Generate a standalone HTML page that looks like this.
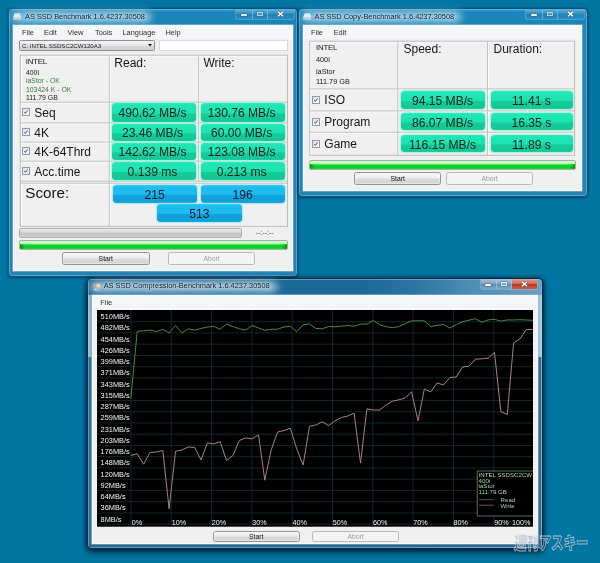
<!DOCTYPE html>
<html><head><meta charset="utf-8"><title>AS SSD Benchmark</title>
<style>
html,body{margin:0;padding:0}
body{width:600px;height:563px;overflow:hidden;position:relative;font-family:"Liberation Sans",sans-serif;
 background:#0276a3;}
#scr{position:absolute;left:0;top:0;width:600px;height:563px;overflow:hidden;filter:blur(0.4px);will-change:transform}
.a{position:absolute;box-sizing:border-box}
.win{position:absolute;box-sizing:border-box;border-radius:4px;border:1px solid #06547d;
 background:linear-gradient(180deg,#3a9fce 0px,#2690c2 2px,#1b84b8 4px,#1b84b8 14px,#2286b8 17px,#2383b5 100%);
 box-shadow:0 0 0 1px rgba(100,180,218,.75) inset,0 1px 3px rgba(0,35,65,.5),0 0 2px rgba(0,35,65,.45);}
.win.act{border-color:#032d4a;background:linear-gradient(90deg,#1b6996 0%,#1b6996 60%,#2a76a2 72%,#4d8db4 84%,#6d9fc0 100%);
 box-shadow:0 0 0 1px rgba(140,185,212,.6) inset,0 3px 7px rgba(0,15,35,.8),0 0 4px rgba(0,15,35,.7);}
.side{position:absolute;box-sizing:border-box}
.client{position:absolute;box-sizing:border-box;background:#f0f0f0;border:1px solid #f4fafd;box-shadow:0 0 0 1px rgba(150,185,205,.55);}
.menubar{position:absolute;background:#f4f6fa;}
.glow{position:absolute;border-radius:8px;background:rgba(235,245,252,.62);filter:blur(3.5px)}
.ttl{position:absolute;font-size:7.4px;color:#0b1a26;white-space:nowrap;line-height:10px;text-shadow:0 0 3px rgba(255,255,255,.9),0 0 5px rgba(255,255,255,.7)}
.mi{position:absolute;font-size:7.4px;color:#2c2c2c;white-space:nowrap;line-height:10px}
.cap{position:absolute;box-sizing:border-box;border:0.6px solid rgba(190,225,245,.3);border-top:none;border-radius:0 0 3px 3px;overflow:hidden}
.cap i{position:absolute;top:0;bottom:0;display:block;box-sizing:border-box}
.tbl{position:absolute;box-sizing:border-box;background:#f0f0f0;border:0.7px solid #bdbdbd}
.vl{position:absolute;width:0.8px;background:#c4c4c4}
.hl{position:absolute;height:0.8px;background:#c9c9c9}
.t{position:absolute;white-space:nowrap;color:#161616}
.sm{font-size:6.85px;line-height:8px}
.hd{font-size:12px;line-height:14px}
.lb{font-size:12px;line-height:14px}
.pill{position:absolute;box-sizing:border-box;border-radius:3.5px;text-align:center;font-size:12.1px;color:#06231a;padding-right:2.4px;
 background:linear-gradient(180deg,#2cebbd 0%,#1ee6b4 12%,#1de3b1 53%,#15cc9a 58%,#14c896 90%,#19cf9d 100%);
 box-shadow:0 0 1.2px 0.7px rgba(150,245,215,.85)}
.blue{position:absolute;box-sizing:border-box;border-radius:3.5px;text-align:center;font-size:12.1px;color:#06182a;padding-right:0.4px;
 background:linear-gradient(180deg,#34c8f6 0%,#1ebef0 12%,#1dbbee 52%,#10a4da 57%,#0fa0d7 90%,#15a8dd 100%);
 box-shadow:0 0 1.2px 0.7px rgba(165,230,250,.85)}
.cb{position:absolute;box-sizing:border-box;width:7.8px;height:7.8px;border:1px solid #9499a6;background:linear-gradient(135deg,#d9dde9,#f2f3f8 55%,#fdfdfe);}
.cb svg{position:absolute;left:0;top:0;width:100%;height:100%}
.gbar{position:absolute;box-sizing:border-box;border-radius:2px;border:0.6px solid #9ab89a;
 background:linear-gradient(180deg,#d6fbd6 0%,#b6f7b6 38%,#3be050 45%,#12d42e 52%,#0bd028 82%,#2ad644 100%);overflow:hidden}
.gbar:before,.gbar:after{content:"";position:absolute;top:0;bottom:0;width:5px}
.gbar:before{left:0;top:42%;background:linear-gradient(90deg,rgba(0,110,0,.6),rgba(0,120,0,0))}
.gbar:after{right:0;top:42%;background:linear-gradient(270deg,rgba(0,110,0,.6),rgba(0,120,0,0))}
.pbar{position:absolute;box-sizing:border-box;border-radius:2px;border:0.6px solid #aeaeae;
 background:linear-gradient(180deg,#ececec 0%,#d6d6d6 40%,#c2c2c2 60%,#cfcfcf 100%)}
.btn{position:absolute;box-sizing:border-box;border-radius:2.5px;border:0.7px solid #959595;text-align:center;font-size:6.8px;color:#111;
 background:linear-gradient(180deg,#f6f6f6 0%,#ececec 48%,#dcdcdc 52%,#d2d2d2 100%);box-shadow:0 0 0 0.5px rgba(255,255,255,.8) inset}
.btn.dis{border-color:#b9b9b9;background:#f4f4f4;color:#9c9c9c;box-shadow:none}
</style></head>
<body>
<div id="scr">
<div class="win" style="left:8px;top:8px;width:290px;height:269px"></div>
<div class="cap" style="left:234.6px;top:9.5px;width:60.0px;height:10.9px"><i style="left:0;right:0;background:linear-gradient(180deg,rgba(255,255,255,.22) 0%,rgba(255,255,255,.10) 45%,rgba(255,255,255,.0) 50%,rgba(255,255,255,.08) 100%)"></i><i style="left:16.5px;width:0.7px;background:rgba(200,230,248,.4)"></i><i style="left:31.2px;width:0.7px;background:rgba(200,230,248,.4)"></i><i style="left:5.2px;top:4.7px;width:5.8px;height:2.3px;bottom:auto;background:rgba(255,255,255,.88);border-radius:.8px;box-shadow:0 0 0 .6px rgba(50,80,110,.6)"></i><i style="left:21.4px;top:2.8px;width:6px;height:4.2px;bottom:auto;border:0.9px solid rgba(215,238,252,.7);border-top-width:1.3px;background:rgba(255,255,255,.12);box-shadow:0 0 0 .4px rgba(50,80,110,.6)"></i><svg class="a" style="left:41.0px;top:1.8px;width:7px;height:6px" viewBox="0 0 7 6"><path d="M1 0.7 L6 5.3 M6 0.7 L1 5.3" stroke="#3a4f66" stroke-width="2.3" fill="none"/><path d="M1 0.7 L6 5.3 M6 0.7 L1 5.3" stroke="#fff" stroke-width="1.5" fill="none"/></svg></div>
<svg class="a" style="left:13.0px;top:12.8px;width:8.5px;height:7.5px" viewBox="0 0 17 15"><path d="M3.5 1 L13.5 1 L16.5 9 L16.5 14 L0.5 14 L0.5 9 Z" fill="#d9dcdf" stroke="#7a848c" stroke-width="0.8"/><path d="M0.5 9 L16.5 9 L16.5 14 L0.5 14 Z" fill="#aeb4b9"/><path d="M3.5 1 L13.5 1 L16.2 8.6 L0.8 8.6 Z" fill="#eceeef"/></svg>
<div class="glow" style="left:12px;top:11px;width:140px;height:12px;background:rgba(200,232,250,.62)"></div>
<div class="ttl" style="left:25px;top:12px">AS SSD Benchmark 1.6.4237.30508</div>
<div class="client" style="left:13px;top:25px;width:280px;height:246px"></div>
<div class="menubar" style="left:14px;top:26px;width:278px;height:12.5px"></div>
<div class="mi" style="left:22.0px;top:28px">File</div>
<div class="mi" style="left:44.0px;top:28px">Edit</div>
<div class="mi" style="left:67.5px;top:28px">View</div>
<div class="mi" style="left:95.0px;top:28px">Tools</div>
<div class="mi" style="left:122.5px;top:28px">Language</div>
<div class="mi" style="left:165.5px;top:28px">Help</div>
<div class="a" style="left:19px;top:40px;width:136px;height:11px;border:0.7px solid #8d8d8d;border-radius:1.5px;background:linear-gradient(180deg,#f4f4f4,#e6e6e6 50%,#d8d8d8 52%,#cfcfcf)"></div>
<div class="t" style="left:22px;top:41.5px;font-size:6.15px;line-height:8px">C: INTEL SSDSC2CW120A3</div>
<svg class="a" style="left:147.5px;top:44.3px;width:4px;height:2.6px" viewBox="0 0 8 5"><path d="M0 0 L8 0 L4 5 Z" fill="#111"/></svg>
<div class="a" style="left:158.7px;top:40px;width:129px;height:11.2px;border:0.7px solid #d6dadf;background:#fff"></div>
<svg class="a" style="left:18px;top:53px;width:273px;height:177px" viewBox="0 0 273 177"><rect x="2.30" y="2.20" width="267.20" height="171.20" fill="#f0f0f0"/><path d="M2.30 50.20H269.50M2.30 70.90H269.50M2.30 90.10H269.50M2.30 109.20H269.50M2.30 129.20H269.50M2.30 131.20H269.50M92.30 2.20V173.40M181.60 2.20V128.10M3.30 2.20V173.40M2.30 3.20H269.50" stroke="rgba(255,255,255,.7)" stroke-width="1" fill="none"/><path d="M2.30 49.20H269.50M2.30 69.90H269.50M2.30 89.10H269.50M2.30 108.20H269.50M2.30 128.20H269.50M2.30 130.20H269.50M91.30 2.20V173.40M180.60 2.20V128.10" stroke="#c3c3c3" stroke-width="1" fill="none"/><rect x="2.30" y="2.20" width="267.20" height="171.20" fill="none" stroke="#bcbcbc" stroke-width="1"/></svg>
<div class="t" style="left:25.7px;top:57.2px;font-size:7.9px;line-height:9px;letter-spacing:-0.25px">INTEL</div>
<div class="t sm" style="left:26px;top:68.5px">400i</div>
<div class="t sm" style="left:26px;top:77.4px;color:#3b7d3f">iaStor - OK</div>
<div class="t sm" style="left:26px;top:85.7px;color:#3b7d3f">103424 K - OK</div>
<div class="t sm" style="left:26px;top:93.5px">111.79 GB</div>
<div class="t hd" style="left:114.3px;top:56px">Read:</div>
<div class="t hd" style="left:203.5px;top:56px">Write:</div>
<div class="cb" style="left:22.2px;top:108.3px"><svg viewBox="0 0 10 10"><path d="M2.2 5.2 L4.2 7.6 L8 2.4" fill="none" stroke="#3a4173" stroke-width="1.6"/></svg></div>
<div class="t lb" style="left:34.3px;top:106.3px">Seq</div>
<div class="pill" style="left:111.7px;top:103.2px;width:84.0px;height:18.6px;line-height:21.4px">490.62 MB/s</div>
<div class="pill" style="left:200.9px;top:103.2px;width:83.9px;height:18.6px;line-height:21.4px">130.76 MB/s</div>
<div class="cb" style="left:22.2px;top:128.2px"><svg viewBox="0 0 10 10"><path d="M2.2 5.2 L4.2 7.6 L8 2.4" fill="none" stroke="#3a4173" stroke-width="1.6"/></svg></div>
<div class="t lb" style="left:34.3px;top:126.2px">4K</div>
<div class="pill" style="left:111.7px;top:123.9px;width:84.0px;height:17.1px;line-height:19.9px">23.46 MB/s</div>
<div class="pill" style="left:200.9px;top:123.9px;width:83.9px;height:17.1px;line-height:19.9px">60.00 MB/s</div>
<div class="cb" style="left:22.2px;top:147.3px"><svg viewBox="0 0 10 10"><path d="M2.2 5.2 L4.2 7.6 L8 2.4" fill="none" stroke="#3a4173" stroke-width="1.6"/></svg></div>
<div class="t lb" style="left:34.3px;top:145.3px">4K-64Thrd</div>
<div class="pill" style="left:111.7px;top:143.1px;width:84.0px;height:17.0px;line-height:19.8px">142.62 MB/s</div>
<div class="pill" style="left:200.9px;top:143.1px;width:83.9px;height:17.0px;line-height:19.8px">123.08 MB/s</div>
<div class="cb" style="left:22.2px;top:166.9px"><svg viewBox="0 0 10 10"><path d="M2.2 5.2 L4.2 7.6 L8 2.4" fill="none" stroke="#3a4173" stroke-width="1.6"/></svg></div>
<div class="t lb" style="left:34.3px;top:164.9px">Acc.time</div>
<div class="pill" style="left:111.7px;top:162.2px;width:84.0px;height:17.9px;line-height:20.7px">0.139 ms</div>
<div class="pill" style="left:200.9px;top:162.2px;width:83.9px;height:17.9px;line-height:20.7px">0.213 ms</div>
<div class="t" style="left:25.3px;top:184px;font-size:15.2px;line-height:17px">Score:</div>
<div class="blue" style="left:112.8px;top:184.7px;width:84.1px;height:17.9px;line-height:20.5px">215</div>
<div class="blue" style="left:200.9px;top:184.7px;width:84.0px;height:17.9px;line-height:20.5px">196</div>
<div class="blue" style="left:157.4px;top:204.0px;width:84.2px;height:18.0px;line-height:20.6px">513</div>
<div class="pbar" style="left:19px;top:228px;width:222.5px;height:9.5px"></div>
<div class="t" style="left:255.8px;top:228.8px;font-size:7px;line-height:8px;color:#444">--:--:--</div>
<div class="gbar" style="left:19px;top:240px;width:269px;height:9.7px"></div>
<div class="btn" style="left:62px;top:252px;width:87.6px;height:12.6px;line-height:11.2px">Start</div>
<div class="btn dis" style="left:167.8px;top:252px;width:87.6px;height:12.6px;line-height:11.2px">Abort</div>
<div class="win" style="left:298px;top:8px;width:290px;height:189px"></div>
<div class="cap" style="left:524.6px;top:9.5px;width:60.0px;height:10.7px"><i style="left:0;right:0;background:linear-gradient(180deg,rgba(255,255,255,.22) 0%,rgba(255,255,255,.10) 45%,rgba(255,255,255,.0) 50%,rgba(255,255,255,.08) 100%)"></i><i style="left:16.5px;width:0.7px;background:rgba(200,230,248,.4)"></i><i style="left:31.2px;width:0.7px;background:rgba(200,230,248,.4)"></i><i style="left:5.3px;top:4.6px;width:5.8px;height:2.3px;bottom:auto;background:rgba(255,255,255,.88);border-radius:.8px;box-shadow:0 0 0 .6px rgba(50,80,110,.6)"></i><i style="left:21.4px;top:2.8px;width:6px;height:4.2px;bottom:auto;border:0.9px solid rgba(215,238,252,.7);border-top-width:1.3px;background:rgba(255,255,255,.12);box-shadow:0 0 0 .4px rgba(50,80,110,.6)"></i><svg class="a" style="left:41.0px;top:1.7px;width:7px;height:6px" viewBox="0 0 7 6"><path d="M1 0.7 L6 5.3 M6 0.7 L1 5.3" stroke="#3a4f66" stroke-width="2.3" fill="none"/><path d="M1 0.7 L6 5.3 M6 0.7 L1 5.3" stroke="#fff" stroke-width="1.5" fill="none"/></svg></div>
<svg class="a" style="left:302.5px;top:12.8px;width:8.5px;height:7.5px" viewBox="0 0 17 15"><path d="M3.5 1 L13.5 1 L16.5 9 L16.5 14 L0.5 14 L0.5 9 Z" fill="#d9dcdf" stroke="#7a848c" stroke-width="0.8"/><path d="M0.5 9 L16.5 9 L16.5 14 L0.5 14 Z" fill="#aeb4b9"/><path d="M3.5 1 L13.5 1 L16.2 8.6 L0.8 8.6 Z" fill="#eceeef"/></svg>
<div class="glow" style="left:302px;top:11px;width:160px;height:12px;background:rgba(200,232,250,.62)"></div>
<div class="ttl" style="left:314.5px;top:12px">AS SSD Copy-Benchmark 1.6.4237.30508</div>
<div class="client" style="left:303px;top:25px;width:279px;height:166px"></div>
<div class="menubar" style="left:304px;top:26px;width:277px;height:13px"></div>
<div class="mi" style="left:311.0px;top:28px">File</div>
<div class="mi" style="left:333.7px;top:28px">Edit</div>
<svg class="a" style="left:307px;top:39px;width:271px;height:120px" viewBox="0 0 271 120"><rect x="2.70" y="2.20" width="264.90" height="114.10" fill="#f0f0f0"/><path d="M2.70 50.90H267.60M2.70 72.90H267.60M2.70 94.30H267.60M91.80 2.20V116.30M181.50 2.20V116.30M3.70 2.20V116.30M2.70 3.20H267.60" stroke="rgba(255,255,255,.7)" stroke-width="1" fill="none"/><path d="M2.70 49.90H267.60M2.70 71.90H267.60M2.70 93.30H267.60M90.80 2.20V116.30M180.50 2.20V116.30" stroke="#c3c3c3" stroke-width="1" fill="none"/><rect x="2.70" y="2.20" width="264.90" height="114.10" fill="none" stroke="#bcbcbc" stroke-width="1"/></svg>
<div class="t" style="left:316px;top:43px;font-size:7.8px;line-height:9px;letter-spacing:-0.2px">INTEL</div>
<div class="t sm" style="left:316px;top:56px;font-size:7.3px">400i</div>
<div class="t sm" style="left:316px;top:67.7px;font-size:7.3px">iaStor</div>
<div class="t sm" style="left:316px;top:77.7px;font-size:7.3px">111.79 GB</div>
<div class="t hd" style="left:403.5px;top:42.3px">Speed:</div>
<div class="t hd" style="left:493.5px;top:42.3px">Duration:</div>
<div class="cb" style="left:312.3px;top:96.2px"><svg viewBox="0 0 10 10"><path d="M2.2 5.2 L4.2 7.6 L8 2.4" fill="none" stroke="#3a4173" stroke-width="1.6"/></svg></div>
<div class="t lb" style="left:324.3px;top:92.9px">ISO</div>
<div class="pill" style="left:401.1px;top:91.2px;width:83.5px;height:17.5px;line-height:21.1px;padding-right:0.6px">94.15 MB/s</div>
<div class="pill" style="left:490.8px;top:91.2px;width:81.8px;height:17.5px;line-height:21.1px;padding-right:0.6px">11.41 s</div>
<div class="cb" style="left:312.3px;top:117.9px"><svg viewBox="0 0 10 10"><path d="M2.2 5.2 L4.2 7.6 L8 2.4" fill="none" stroke="#3a4173" stroke-width="1.6"/></svg></div>
<div class="t lb" style="left:324.3px;top:114.6px">Program</div>
<div class="pill" style="left:401.1px;top:112.9px;width:83.5px;height:17.5px;line-height:21.1px;padding-right:0.6px">86.07 MB/s</div>
<div class="pill" style="left:490.8px;top:112.9px;width:81.8px;height:17.5px;line-height:21.1px;padding-right:0.6px">16.35 s</div>
<div class="cb" style="left:312.3px;top:139.9px"><svg viewBox="0 0 10 10"><path d="M2.2 5.2 L4.2 7.6 L8 2.4" fill="none" stroke="#3a4173" stroke-width="1.6"/></svg></div>
<div class="t lb" style="left:324.3px;top:136.6px">Game</div>
<div class="pill" style="left:401.1px;top:134.9px;width:83.5px;height:17.5px;line-height:21.1px;padding-right:0.6px">116.15 MB/s</div>
<div class="pill" style="left:490.8px;top:134.9px;width:81.8px;height:17.5px;line-height:21.1px;padding-right:0.6px">11.89 s</div>
<div class="gbar" style="left:309px;top:160px;width:267px;height:9.7px"></div>
<div class="btn" style="left:354px;top:172px;width:87.4px;height:12.6px;line-height:11.2px">Start</div>
<div class="btn dis" style="left:446px;top:172px;width:87px;height:12.6px;line-height:11.2px">Abort</div>
<div class="win act" style="left:87px;top:278px;width:456px;height:271px"></div>
<div class="side" style="left:88px;top:295px;width:4px;height:62px;background:linear-gradient(90deg,#a3c5d9,#8fb2c7 55%,#7d9db3)"></div>
<div class="side" style="left:89px;top:357px;width:3px;height:187px;background:linear-gradient(90deg,#26648e,#3c7299 50%,#5a86a6)"></div>
<div class="side" style="left:537px;top:295px;width:5px;height:62px;background:linear-gradient(90deg,#8fb0c5,#a5c6da 60%,#b5d2e3)"></div>
<div class="side" style="left:537px;top:357px;width:4px;height:187px;background:linear-gradient(90deg,#5a86a6,#2d6991 40%,#2d6991)"></div>
<div class="side" style="left:89px;top:543px;width:452px;height:4px;background:linear-gradient(180deg,#46789c,#28648d 40%,#2d6a92)"></div>
<div class="cap" style="left:480.0px;top:279.2px;width:58.0px;height:10.6px"><i style="left:0;width:31.4px;background:linear-gradient(180deg,#a3c2d8 0%,#7ea6c3 45%,#5c8db2 52%,#79a7c8 100%)"></i><i style="left:31.4px;right:0;background:linear-gradient(180deg,#dfa596 0%,#cf6a58 45%,#bb3522 52%,#cf5a3c 100%)"></i><i style="left:14.6px;width:0.7px;background:rgba(200,230,248,.4)"></i><i style="left:30.2px;width:0.7px;background:rgba(200,230,248,.4)"></i><i style="left:4.3px;top:4.6px;width:5.8px;height:2.3px;bottom:auto;background:rgba(255,255,255,1);border-radius:.8px;box-shadow:0 0 0 .6px rgba(50,80,110,.6)"></i><i style="left:20.0px;top:2.8px;width:6px;height:4.2px;bottom:auto;border:0.9px solid rgba(215,238,252,.95);border-top-width:1.3px;background:rgba(255,255,255,.12);box-shadow:0 0 0 .4px rgba(50,80,110,.6)"></i><svg class="a" style="left:39.5px;top:1.7px;width:7px;height:6px" viewBox="0 0 7 6"><path d="M1 0.7 L6 5.3 M6 0.7 L1 5.3" stroke="#3a4f66" stroke-width="2.3" fill="none"/><path d="M1 0.7 L6 5.3 M6 0.7 L1 5.3" stroke="#fff" stroke-width="1.5" fill="none"/></svg></div>
<svg class="a" style="left:92.5px;top:283.3px;width:8px;height:8px" viewBox="0 0 16 16"><rect x="0.5" y="0.5" width="15" height="15" rx="2.5" fill="rgba(225,235,243,.3)"/><circle cx="4.6" cy="8.3" r="3.4" fill="#d5442f"/><circle cx="10.6" cy="5.2" r="3.8" fill="#f3d236"/><circle cx="10.4" cy="12" r="2.4" fill="#4f7fcf"/><circle cx="5.5" cy="13" r="1.6" fill="#e8eef4"/></svg>
<div class="glow" style="left:90px;top:281px;width:188px;height:12px;background:rgba(225,238,247,.62)"></div>
<div class="ttl" style="left:103.7px;top:281.4px">AS SSD Compression-Benchmark 1.6.4237.30508</div>
<div class="client" style="left:92px;top:295px;width:445.5px;height:248.7px"></div>
<div class="menubar" style="left:93px;top:296px;width:443.5px;height:13.5px"></div>
<div class="mi" style="left:100.3px;top:297.6px">File</div>
<svg class="a" style="left:97.4px;top:310px;width:436px;height:216.7px" viewBox="0 0 436 216.7"><rect x="0" y="0" width="436" height="216.7" fill="#000"/><path d="M33.90 0V216.7M74.22 0V216.7M114.54 0V216.7M154.86 0V216.7M195.18 0V216.7M235.50 0V216.7M275.82 0V216.7M316.14 0V216.7M356.46 0V216.7M396.78 0V216.7M0 11.70H436M0 22.95H436M0 34.20H436M0 45.45H436M0 56.70H436M0 67.95H436M0 79.20H436M0 90.45H436M0 101.70H436M0 112.95H436M0 124.20H436M0 135.45H436M0 146.70H436M0 157.95H436M0 169.20H436M0 180.45H436M0 191.70H436M0 202.95H436M0 214.20H436" stroke="#10292c" stroke-width="0.95" fill="none"/><g font-family="Liberation Sans, sans-serif" font-size="7.4" fill="#f4f4f4"><text x="3.6" y="9.1">510MB/s</text><text x="3.6" y="20.4">482MB/s</text><text x="3.6" y="31.6">454MB/s</text><text x="3.6" y="42.9">426MB/s</text><text x="3.6" y="54.1">399MB/s</text><text x="3.6" y="65.4">371MB/s</text><text x="3.6" y="76.7">343MB/s</text><text x="3.6" y="87.9">315MB/s</text><text x="3.6" y="99.2">287MB/s</text><text x="3.6" y="110.4">259MB/s</text><text x="3.6" y="121.7">231MB/s</text><text x="3.6" y="133.0">203MB/s</text><text x="3.6" y="144.2">176MB/s</text><text x="3.6" y="155.5">148MB/s</text><text x="3.6" y="166.7">120MB/s</text><text x="3.6" y="178.0">92MB/s</text><text x="3.6" y="189.3">64MB/s</text><text x="3.6" y="200.5">36MB/s</text><text x="3.6" y="211.8">8MB/s</text><text x="34.7" y="214.6" font-size="7.2">0%</text><text x="74.7" y="214.6" font-size="7.2">10%</text><text x="114.7" y="214.6" font-size="7.2">20%</text><text x="155.2" y="214.6" font-size="7.2">30%</text><text x="195.5" y="214.6" font-size="7.2">40%</text><text x="235.7" y="214.6" font-size="7.2">50%</text><text x="275.9" y="214.6" font-size="7.2">60%</text><text x="316.2" y="214.6" font-size="7.2">70%</text><text x="356.4" y="214.6" font-size="7.2">80%</text><text x="397.2" y="214.6" font-size="7.2">90%</text><text x="415.0" y="214.6" font-size="7.2">100%</text></g><polyline points="33.8,88.8 40.2,21.4 46.6,20.7 53.0,20.1 59.4,21.6 65.8,19.2 72.1,22.9 78.5,15.5 84.9,22.9 91.3,18.8 97.7,20.1 104.0,18.5 110.4,17.0 116.8,16.5 123.2,19.2 129.5,14.1 135.9,16.5 142.3,18.8 148.7,20.1 155.1,15.5 161.5,17.9 167.8,20.3 174.2,19.2 180.6,19.2 187.0,17.0 193.3,16.3 199.7,21.6 206.1,14.8 212.5,13.9 218.9,18.5 225.2,18.8 231.6,16.5 238.0,16.8 244.4,16.2 250.8,15.5 257.1,16.3 263.5,14.1 269.9,14.1 276.3,10.4 282.7,14.8 289.0,16.6 295.4,17.7 301.8,16.6 308.2,13.7 314.6,10.9 321.0,10.8 327.3,10.8 333.7,16.4 340.1,15.4 346.5,14.5 352.9,18.0 359.2,14.8 365.6,11.7 372.0,10.2 378.4,8.7 384.8,12.3 391.1,9.9 397.5,9.3 403.9,11.1 410.3,9.9 416.6,10.0 423.0,9.7 429.4,10.0 435.8,10.3" fill="none" stroke="#4c8a3a" stroke-width="1.0" stroke-linejoin="round"/><polyline points="33.8,145.5 40.2,143.8 46.6,154.2 53.0,142.5 59.4,142.0 65.8,140.5 72.1,198.8 78.5,141.2 84.9,140.0 91.3,137.0 97.7,137.5 104.0,150.0 110.4,133.0 116.8,133.8 123.2,131.8 129.5,150.5 135.9,145.5 142.3,130.5 148.7,128.0 155.1,128.8 161.5,125.0 167.8,170.2 174.2,140.0 180.6,122.0 187.0,120.5 193.3,118.2 199.7,138.8 206.1,155.0 212.5,116.2 218.9,115.0 225.2,111.8 231.6,115.5 238.0,110.8 244.4,107.5 250.8,106.0 257.1,103.2 263.5,153.0 269.9,98.8 276.3,100.0 282.7,100.0 289.0,95.0 295.4,91.2 301.8,89.8 308.2,88.0 314.6,81.8 321.0,110.8 327.3,79.2 333.7,81.8 340.1,73.0 346.5,75.0 352.9,67.5 359.2,67.0 365.6,57.0 372.0,56.2 378.4,49.2 384.8,48.8 391.1,48.2 397.5,42.5 403.9,101.8 410.3,104.5 416.6,33.0 423.0,28.8 429.4,19.5 435.8,19.5" fill="none" stroke="#b08886" stroke-width="0.95" stroke-linejoin="round"/><rect x="380.2" y="161.0" width="70" height="45" fill="#000" stroke="#7f9a80" stroke-width="0.7"/><g font-family="Liberation Sans, sans-serif" font-size="6.15" fill="#a6d6a6"><text x="381.6" y="166.8">INTEL SSDSC2CW</text><text x="381.6" y="172.8">400i</text><text x="381.6" y="178.3">iaStor</text><text x="381.6" y="183.8">111.79 GB</text><text x="403.6" y="191.8">Read</text><text x="403.6" y="197.6">Write</text></g><path d="M382.1 189.6H396.8" stroke="#4d7040" stroke-width="0.8"/><path d="M382.1 195.2H396.8" stroke="#9a6262" stroke-width="0.8"/></svg>
<div class="btn" style="left:212.5px;top:530.5px;width:87.3px;height:11.6px;line-height:10.2px">Start</div>
<div class="btn dis" style="left:312px;top:530.5px;width:87px;height:11.6px;line-height:10.2px">Abort</div>
<div class="a" style="left:513.6px;top:532.2px;font-family:'Liberation Sans','Noto Sans CJK JP',sans-serif;font-weight:900;font-size:17.6px;line-height:22px;white-space:nowrap;transform:scaleX(0.705);transform-origin:0 0;color:rgba(255,255,255,.07);-webkit-text-stroke:0.95px rgba(228,240,248,.66);text-shadow:1.2px 1.2px 1.5px rgba(0,30,60,.3)">週刊アスキー</div>
</div>
</body></html>
